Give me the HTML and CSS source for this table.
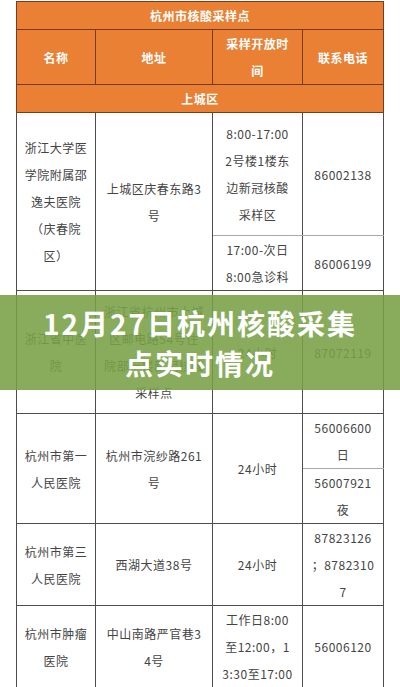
FILE: index.html
```html
<!DOCTYPE html>
<html lang="zh-CN">
<head>
<meta charset="utf-8">
<title>12月27日杭州核酸采集点实时情况</title>
<link rel="stylesheet" href="styles.css">
</head>
<body>
<div class="page">
  <table class="sites">
    <colgroup>
      <col class="c-name"><col class="c-addr"><col class="c-time"><col class="c-tel">
    </colgroup>
    <thead>
      <tr class="h-title"><th colspan="4">杭州市核酸采样点</th></tr>
      <tr class="h-cols"><th>名称</th><th>地址</th><th>采样开放时<br>间</th><th>联系电话</th></tr>
      <tr class="h-dist"><th colspan="4">上城区</th></tr>
    </thead>
    <tbody>
      <tr class="r-123">
        <td rowspan="2">浙江大学医<br>学院附属邵<br>逸夫医院<br>（庆春院<br>区）</td>
        <td rowspan="2">上城区庆春东路3<br>号</td>
        <td class="sub">8:00-17:00<br>2号楼1楼东<br>边新冠核酸<br>采样区</td>
        <td class="sub">86002138</td>
      </tr>
      <tr class="r-55">
        <td>17:00-次日<br>8:00急诊科</td>
        <td>86006199</td>
      </tr>
      <tr class="r-123">
        <td>浙江省中医<br>院</td>
        <td>浙江省杭州市上城<br>区邮电路54号住<br>院部一楼新冠核酸<br>采样点</td>
        <td>24小时</td>
        <td>87072119</td>
      </tr>
      <tr class="r-55">
        <td rowspan="2">杭州市第一<br>人民医院</td>
        <td rowspan="2">杭州市浣纱路261<br>号</td>
        <td rowspan="2">24小时</td>
        <td class="sub">56006600<br>日</td>
      </tr>
      <tr class="r-54">
        <td>56007921<br>夜</td>
      </tr>
      <tr class="r-82">
        <td>杭州市第三<br>人民医院</td>
        <td>西湖大道38号</td>
        <td>24小时</td>
        <td>87823126<br>；8782310<br>7</td>
      </tr>
      <tr class="r-82">
        <td>杭州市肿瘤<br>医院</td>
        <td>中山南路严官巷3<br>4号</td>
        <td>工作日8:00<br>至12:00，1<br>3:30至17:00</td>
        <td>56006120</td>
      </tr>
      <tr class="r-82">
        <td></td><td></td><td></td><td></td>
      </tr>
    </tbody>
  </table>

  <div class="banner">
    <h1 class="banner-title">12月27日杭州核酸采集点实时情况</h1>
  </div>
</div>
</body>
</html>
```

FILE: styles.css
```css
html, body {
  margin: 0;
  padding: 0;
  background: #ffffff;
}

body {
  width: 400px;
  height: 687px;
  overflow: hidden;
  font-family: "Noto Sans CJK SC", "Noto Sans", sans-serif;
}

.page {
  position: relative;
  width: 400px;
  height: 687px;
  overflow: hidden;
}

.sites {
  margin: 1px 0 0 16px;
  width: 368px;
  table-layout: fixed;
  border-collapse: collapse;
  font-size: 12px;
  letter-spacing: 0.5px;
  line-height: 27px;
  text-align: center;
  color: #444444;
}

.c-name { width: 79px; }
.c-addr { width: 117px; }
.c-time { width: 90px; }
.c-tel  { width: 81px; }

.sites th {
  background: #ea8033;
  color: #ffffff;
  font-weight: 700;
  border: 1px solid #7a3b1c;
  padding: 0 4px;
  vertical-align: middle;
}

.sites td {
  border: 1px solid #4d4d4d;
  padding: 0 5px;
  vertical-align: middle;
  background: #ffffff;
}

.sites td.sub {
  border-bottom-color: #a8a8a8;
}

.h-title { height: 27px; }
.h-cols  { height: 55px; }
.h-dist  { height: 28px; }
.r-123   { height: 123px; }
.r-55    { height: 55px; }
.r-54    { height: 54px; }
.r-82    { height: 82px; }

.banner {
  position: absolute;
  left: 0;
  top: 295px;
  width: 400px;
  height: 95px;
  background: rgba(120, 161, 70, 0.88);
  display: flex;
  align-items: center;
  justify-content: center;
}

.banner-title {
  margin: 0;
  max-width: 325px;
  font-size: 28px;
  font-weight: 700;
  letter-spacing: 2px;
  line-height: 40px;
  color: #ffffff;
  text-align: center;
}
```
